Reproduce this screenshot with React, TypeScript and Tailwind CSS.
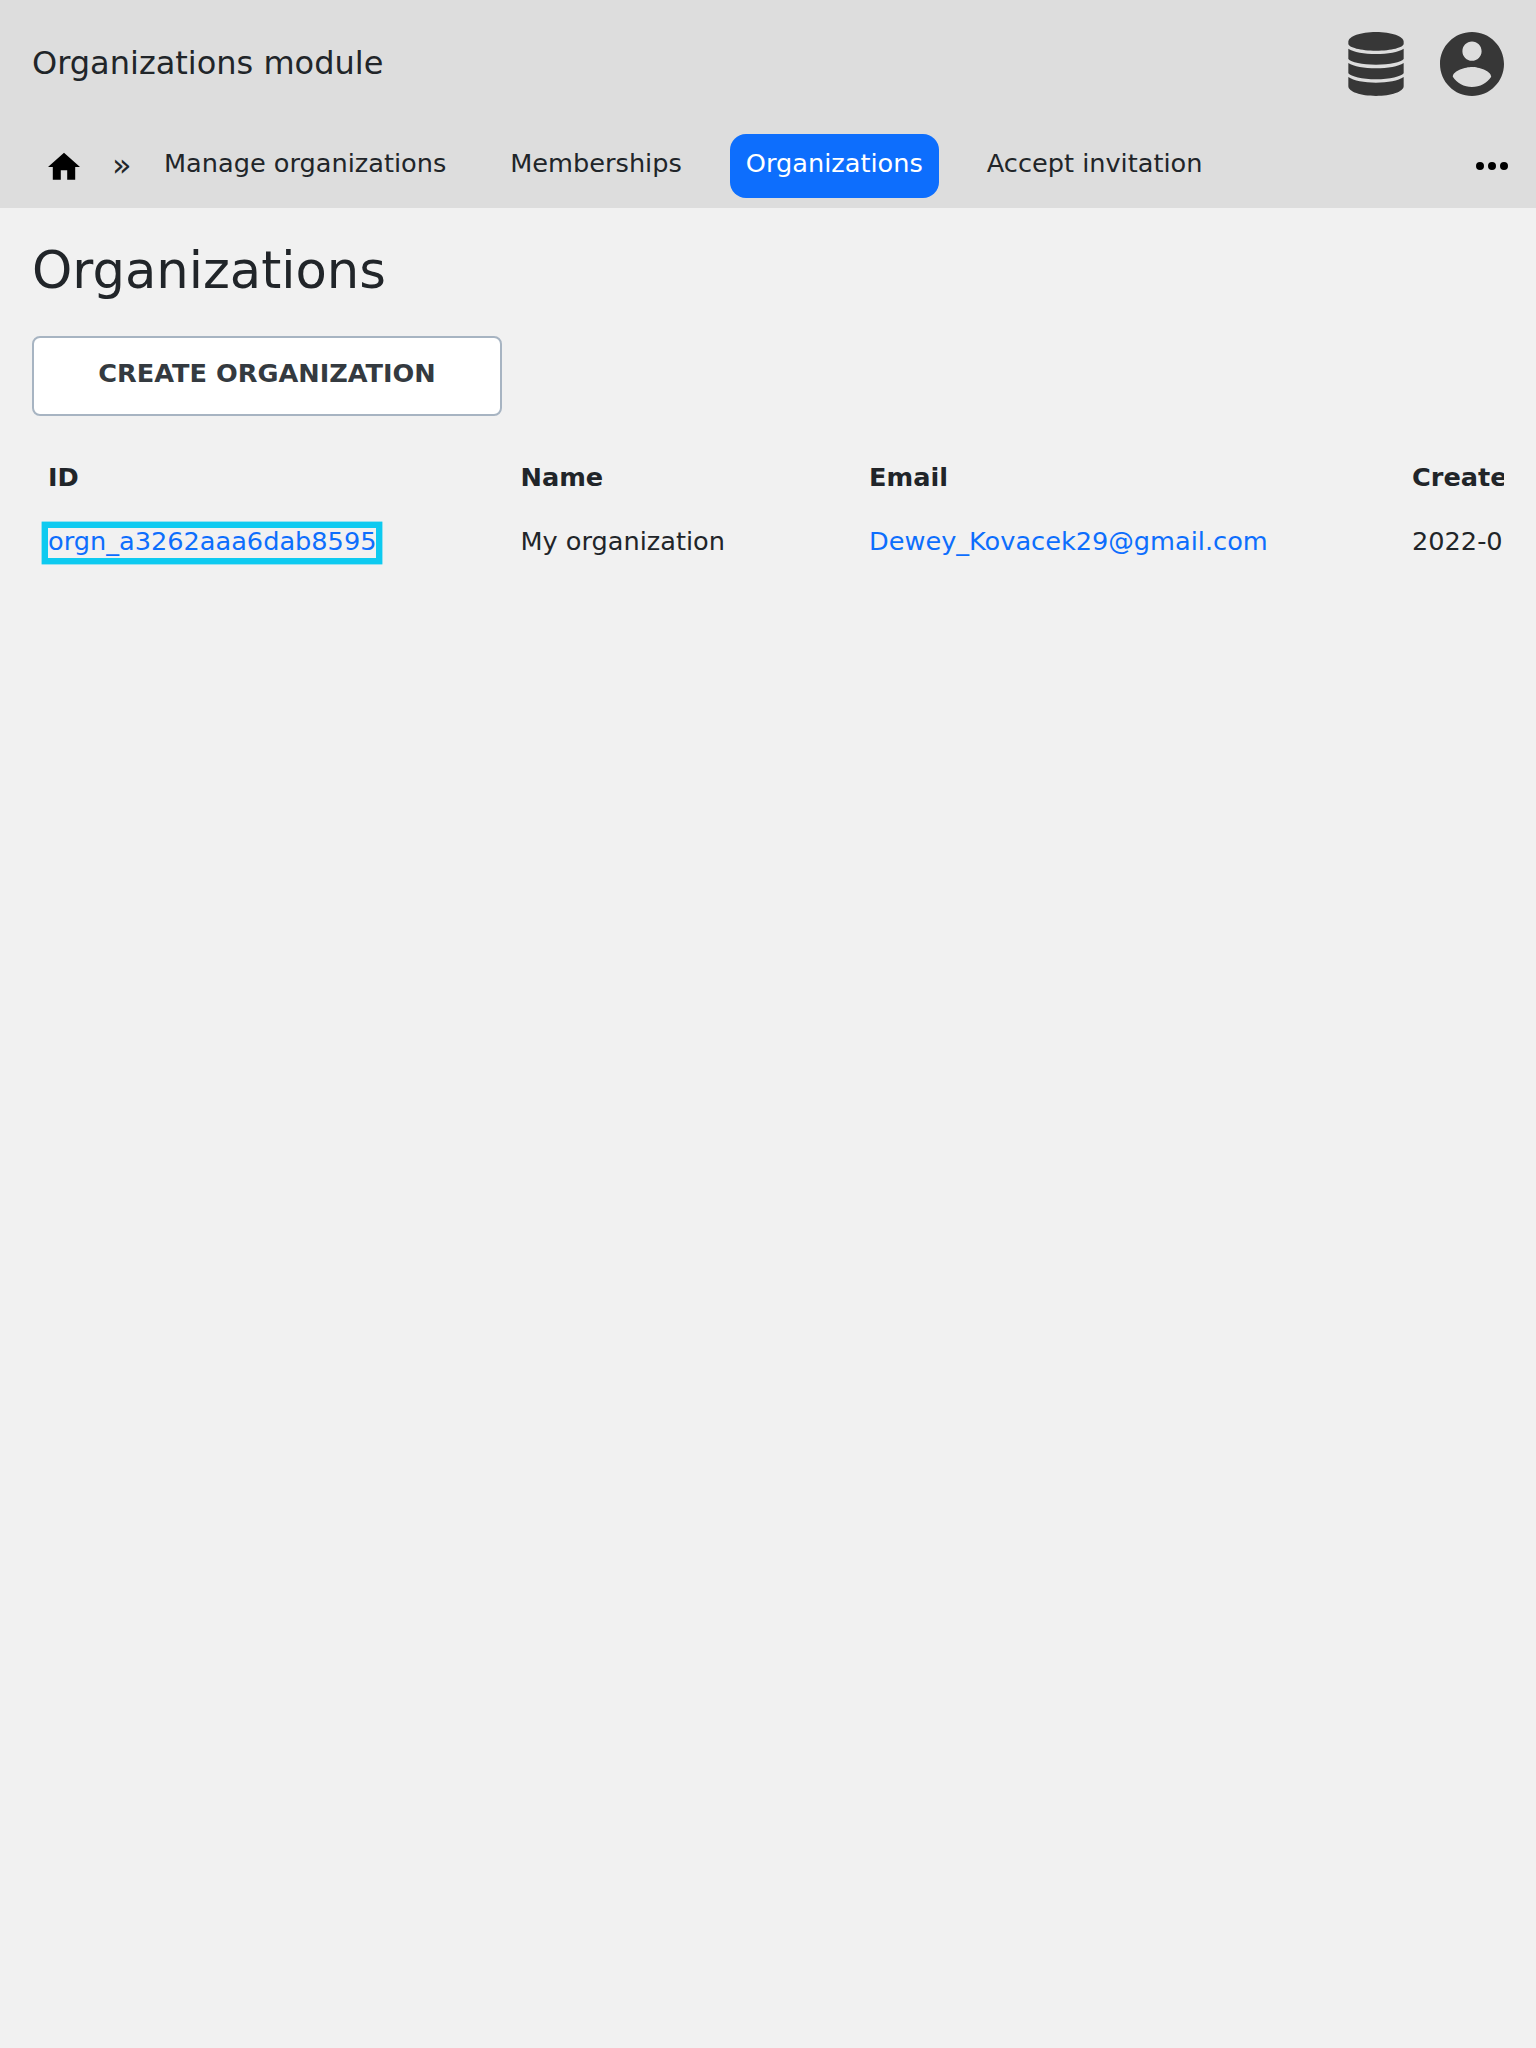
const NAV = [
  { label: "Manage organizations" },
  { label: "Memberships" },
  { label: "Organizations", active: true },
  { label: "Accept invitation" },
];

function DatabaseIcon() {
  return (
    <svg className="h-16 w-14" viewBox="0 0 168 192" fill="#373737">
      <path d="M84 0C130 0 167 13 167 29v6C167 46 130 56 84 56S1 46 1 35v-6C1 13 38 0 84 0Z" />
      <path d="M1 50c16 10 47 16 83 16s67-6 83-16v31c-8 10-41 17-83 17S9 91 1 81Z" />
      <path d="M1 93c16 10 47 16 83 16s67-6 83-16v31c-8 10-41 18-83 18S9 134 1 124Z" />
      <path d="M1 135c16 11 47 17 83 17s67-6 83-17v28c0 16-37 29-83 29S1 179 1 163Z" />
    </svg>
  );
}

function AccountIcon() {
  return (
    <svg className="h-16 w-16" viewBox="2 2 20 20" fill="#373737">
      <path d="M12 2C6.48 2 2 6.48 2 12s4.48 10 10 10 10-4.48 10-10S17.52 2 12 2zm0 3c1.66 0 3 1.34 3 3s-1.34 3-3 3-3-1.34-3-3 1.34-3 3-3zm0 14.2c-2.5 0-4.71-1.28-6-3.22.03-1.99 4-3.08 6-3.08 1.99 0 5.97 1.09 6 3.08-1.29 1.94-3.5 3.22-6 3.22z" />
    </svg>
  );
}

export default function App() {
  return (
    <div className="min-h-[2048px] w-[1536px] overflow-hidden bg-[#f1f1f1] font-['DejaVu_Sans',sans-serif] text-[25.6px] leading-[38.4px] text-[#212529]">
      <header className="h-52 bg-[#dddddd]">
        <div className="flex h-32 items-center justify-between px-8">
          <span className="pb-0.5 text-[32px] leading-12">Organizations module</span>
          <div className="flex items-center gap-9">
            <DatabaseIcon />
            <AccountIcon />
          </div>
        </div>
        <nav className="flex h-20 items-start pt-1.5 pr-5 pl-12">
          <svg className="mt-[18px] h-7 w-8" viewBox="2 2.6 20 17.5">
            <path d="M10 20v-6h4v6h5v-8h3L12 3 2 12h3v8z" />
          </svg>
          <span className="mt-[7px] ml-8 w-9 text-[32px] leading-12">»</span>
          <ul className="flex gap-8">
            {NAV.map((n) => (
              <li
                key={n.label}
                className={
                  n.active
                    ? "h-16 rounded-2xl bg-[#0d6efd] px-4 pt-2.5 whitespace-nowrap text-white"
                    : "h-16 px-4 pt-2.5 whitespace-nowrap"
                }
              >
                {n.label}
              </li>
            ))}
          </ul>
          <svg className="mt-2 ml-auto h-12 w-12" viewBox="0 0 24 24">
            <path d="M6 10a2 2 0 1 0 0 4 2 2 0 0 0 0-4zm6 0a2 2 0 1 0 0 4 2 2 0 0 0 0-4zm6 0a2 2 0 1 0 0 4 2 2 0 0 0 0-4z" />
          </svg>
        </nav>
      </header>
      <main className="px-8 pt-8">
        <h1 className="text-[51.2px] leading-[61.4px]">Organizations</h1>
        <button className="mt-[35px] flex h-20 w-[470px] justify-center rounded-lg border-2 border-[#a7b4c2] bg-white pt-4 font-bold text-[#343a40]">
          CREATE ORGANIZATION
        </button>
        <div className="mt-[29px] overflow-hidden">
          <table className="w-[1760px] table-fixed text-left">
            <colgroup>
              <col className="w-[472.5px]" />
              <col className="w-[348.5px]" />
              <col className="w-[543px]" />
              <col />
            </colgroup>
            <thead>
              <tr className="h-16">
                <th className="px-4 font-bold">ID</th>
                <th className="px-4 font-bold">Name</th>
                <th className="px-4 font-bold">Email</th>
                <th className="px-4 font-bold whitespace-nowrap">Created</th>
              </tr>
            </thead>
            <tbody>
              <tr className="h-16">
                <td className="px-4">
                  <a className="inline-block h-[30px] leading-[26px] text-[#0d6efd] shadow-[0_0_0_6.4px_#0dcaf0]">
                    orgn_a3262aaa6dab8595
                  </a>
                </td>
                <td className="px-4">My organization</td>
                <td className="px-4">
                  <a className="text-[#0d6efd]">Dewey_Kovacek29@gmail.com</a>
                </td>
                <td className="px-4 whitespace-nowrap">2022-0</td>
              </tr>
            </tbody>
          </table>
        </div>
      </main>
    </div>
  );
}
